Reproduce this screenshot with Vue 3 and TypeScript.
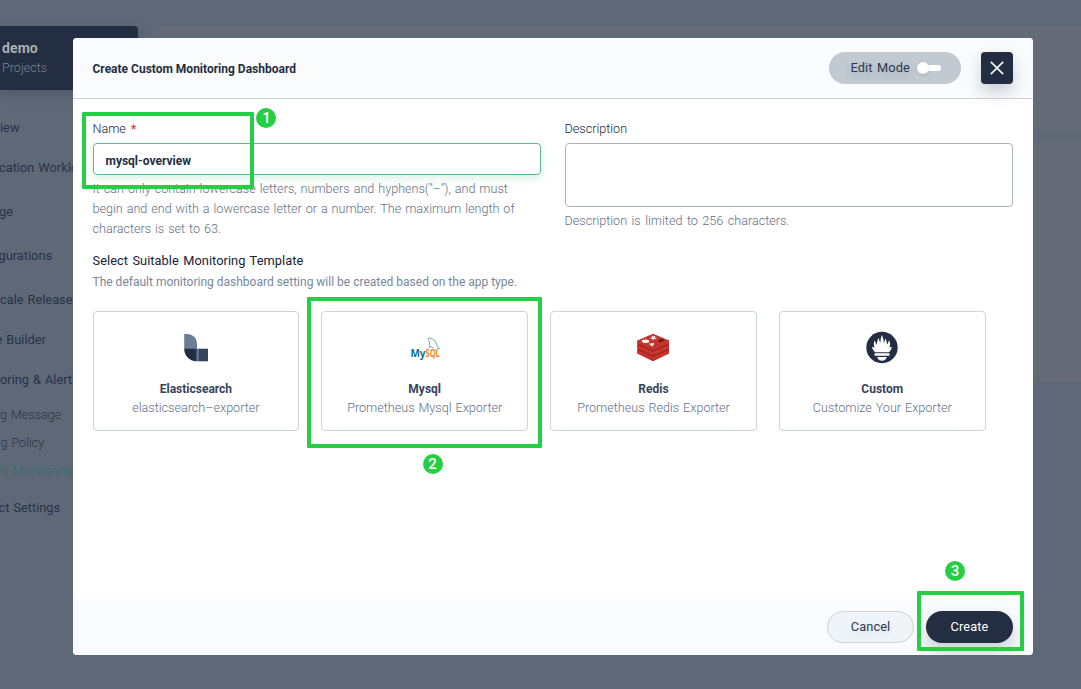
<script setup lang="ts">
interface NavItem { text: string; top: number; left: number; kind?: 'sub' | 'active' }
interface Template { id: string; name: string; note: string }

const nav: NavItem[] = [
  { text: 'iew', top: 118, left: 0 },
  { text: 'cation Worklo', top: 158, left: -1 },
  { text: 'ge', top: 202, left: -1 },
  { text: 'gurations', top: 246, left: -1.5 },
  { text: 'cale Release', top: 290, left: 0 },
  { text: 'e Builder', top: 330, left: -4.5 },
  { text: 'oring & Alert', top: 370, left: 0 },
  { text: 'g Message', top: 405, left: 0, kind: 'sub' },
  { text: 'g Policy', top: 433, left: 0.5, kind: 'sub' },
  { text: 'm Monitoring', top: 461, left: -2.5, kind: 'active' },
  { text: 'ct Settings', top: 498, left: -1.5 },
]
const templates: Template[] = [
  { id: 'elastic', name: 'Elasticsearch', note: 'elasticsearch–exporter' },
  { id: 'mysql', name: 'Mysql', note: 'Prometheus Mysql Exporter' },
  { id: 'redis', name: 'Redis', note: 'Prometheus Redis Exporter' },
  { id: 'custom', name: 'Custom', note: 'Customize Your Exporter' },
]
</script>

<template>
  <div class="page">
    <div class="topline"></div>
    <div class="panel panel-top"></div>
    <div class="panel panel-bottom"></div>
    <div class="project"><strong>demo</strong><span>Projects</span></div>
    <div v-for="n in nav" :key="n.text" class="nav" :class="n.kind" :style="{ top: n.top + 'px', left: n.left + 'px' }">{{ n.text }}</div>

    <section class="modal">
      <header class="head">
        <h1>Create Custom Monitoring Dashboard</h1>
        <button class="mode"><span>Edit Mode</span><i class="switch"></i></button>
        <button class="close">
          <svg width="16" height="16" viewBox="0 0 16 16"><path d="M1.8 1.8 14.2 14.2M14.2 1.8 1.8 14.2" stroke="#f2f3f4" stroke-width="1.7" fill="none" /></svg>
        </button>
      </header>
      <main class="body">
        <div class="form">
          <div class="field">
            <label class="label">Name <b>*</b></label>
            <div class="input">mysql-overview</div>
            <p class="help">
              It can only contain lowercase letters, numbers and hyphens("–"), and must<br />
              begin and end with a lowercase letter or a number. The maximum length of<br />
              characters is set to 63.
            </p>
          </div>
          <div class="field">
            <label class="label">Description</label>
            <div class="area"></div>
            <p class="help help-desc">Description is limited to 256 characters.</p>
          </div>
        </div>
        <h2>Select Suitable Monitoring Template</h2>
        <p class="sub-title">The default monitoring dashboard setting will be created based on the app type.</p>
        <div class="cards">
          <div v-for="t in templates" :key="t.id" class="card">
            <svg v-if="t.id === 'elastic'" class="icon" viewBox="0 0 40 40">
              <path d="M8.2 6H11c5.8 0 10 4.3 10 10v5H8.2z" fill="#6c7d98" />
              <path d="M8.2 20.7H21v12.6C13.7 33.3 8.2 28 8.2 20.7z" fill="#242e42" />
              <path d="M20.3 20.7h3v12.6h-3z" fill="#5f708a" />
              <path d="M23 20.7h9v12.6h-9z" fill="#36435c" />
            </svg>
            <svg v-else-if="t.id === 'mysql'" class="icon" viewBox="0 0 40 40">
              <text x="5.4" y="28.7" font-size="10" font-weight="700" fill="#14708a">My<tspan fill="#f58220" textLength="14.3" lengthAdjust="spacingAndGlyphs">SQL</tspan></text>
              <path d="M28 20.3c-.5-1.2-.8-1.6-1.6-2-.6 0-.6 1.5-1 1.5-1.2-1-1.3-3.3-.7-5-.5-1.5-1.9-3-1.5-4.3.5-.8 2-.2 2.8.4 2.8-.2 4.7 2.8 5.6 5.4.5 2 1.2 2.7 2.7 4.2-1 .1-1.8.2-2.1.6" fill="none" stroke="#4f96ad" stroke-width=".9" />
            </svg>
            <svg v-else-if="t.id === 'redis'" class="icon" viewBox="0 0 40 40">
              <path d="M4.3 13 20 6.3l16 6.7v12.6L20 33.2 4.3 25.6z" fill="#a82822" />
              <path d="M4.3 22.2 20 29l16-6.8v3L20 32 4.3 25.2z" fill="#c9332e" />
              <path d="M4.3 17.2 20 24l16-6.8v3L20 27 4.3 20.2z" fill="#cc3530" />
              <path d="M4.3 12.4 20 5.8l16 6.6v2.8L20 22 4.3 15.2z" fill="#c9332e" />
              <ellipse cx="12.5" cy="13.3" rx="3.7" ry="1.7" fill="#fff" />
              <path d="m19 7.4 1.3 1.2 2.4-.4-.8 1.6 2 1-2.7.2-1.1 1.2-.8-1.5-2.4-.3 1.9-1zM15.6 15.7l5.8-.7-1.8 3.4z" fill="#fff" />
              <path d="m24.3 12.8 4.2-2.2 3.5 1.7-4.3 2.1z" fill="#791916" />
            </svg>
            <svg v-else class="icon" viewBox="0 0 40 40">
              <circle cx="20" cy="19.5" r="15.7" fill="#242e42" />
              <path d="M13 24.2c-1.7-2-2.7-3.7-3.1-5.2l2.6.5c-1.1-2.7-.9-5.4.5-7.2.2 2 .8 3.4 1.8 4.4.1-3.1 1-4.4 1.5-6.6 1.3 1.7 1.2 3.8 1.9 5 .5-2.5.4-5.5 1.8-8 1.1 2.4 1.5 5.3 1.8 7.8.9-1.4.8-3.1 1.9-4.5.6 2.2 1.1 3.7 1.4 6 1-1 1.5-2.3 1.8-4.1 1.5 2 1.6 4.6.5 7.2l2.7-.5c-.6 1.8-1.5 3.5-3.1 5.2z" fill="#fff" />
              <path d="M12.6 25.3h14.8v2.5H12.6zM15.2 29h9.6c-.4 2.4-2.3 3.7-4.8 3.7S15.6 31.4 15.2 29z" fill="#fff" />
            </svg>
            <strong>{{ t.name }}</strong>
            <span>{{ t.note }}</span>
          </div>
        </div>
      </main>
      <footer class="foot">
        <button class="btn cancel">Cancel</button>
        <button class="btn create">Create</button>
      </footer>
    </section>

    <div class="mark mark-1"></div><div class="mark mark-2"></div><div class="mark mark-3"></div>
    <div class="dot dot-1">1</div><div class="dot dot-2">2</div><div class="dot dot-3">3</div>
  </div>
</template>

<style>
body { margin: 0; overflow: hidden; }
</style>
<style scoped>
* { box-sizing: border-box; }
.page { position: relative; width: 1081px; height: 689px; overflow: hidden; background: #5f6877; font: 12px/20px Roboto, "Noto Sans", sans-serif; color: #242e42; }
.topline { position: absolute; top: 5px; left: 0; width: 100%; height: 1px; background: #5a6373; }
.panel { position: absolute; left: 158px; right: 0; background: #656a77; }
.panel-top { top: 26px; height: 104px; border-radius: 4px 0 0 0; }
.panel-bottom { top: 142px; height: 240px; }
.project { position: absolute; top: 26px; left: 0; width: 138px; height: 64px; padding: 12px 2px; display: flex; flex-direction: column; background: #242e42; border-radius: 0 4px 0 0; box-shadow: 0 4px 12px #242e4240; }
.project strong { font-size: 14px; line-height: 20px; color: #aaadb3; letter-spacing: .1px; }
.project span { font-size: 12.6px; line-height: 20px; color: #7b8492; font-weight: 300; }
.nav { position: absolute; color: #27334a; font-size: 12.8px; font-weight: 400; word-spacing: .85px; white-space: nowrap; }
.nav.sub { color: #2a364c; font-size: 12.6px; font-weight: 300; }
.nav.active { color: #2d7067; font-size: 12.6px; font-weight: 300; }
.modal { position: absolute; left: 73px; top: 38px; width: 960px; height: 617px; display: flex; flex-direction: column; background: #fff; border-radius: 4px; overflow: hidden; }
.head { display: flex; align-items: center; height: 61px; flex: none; padding: 0 20px 0 19.5px; background: #f9fbfd; border-bottom: 1px solid #ccd3db; }
h1 { margin: 2px auto 0 0; font-size: 12px; font-weight: 700; line-height: 20px; }
button { font: inherit; border: 0; padding: 0; }
.mode { width: 132px; height: 32px; border-radius: 16px; background: #c1c9d1; display: flex; align-items: center; padding-left: 21.5px; gap: 7px; color: #2c3950; font-size: 12.8px; font-weight: 400; letter-spacing: .1px; word-spacing: 1.2px; text-shadow: 0 4px 8px #36435c33; }
.switch { position: relative; width: 24px; height: 6px; border-radius: 3px; background: #fff; }
.switch::before { content: ''; position: absolute; left: 0; top: -3px; width: 12px; height: 12px; border-radius: 50%; background: #fff; box-shadow: 0 1px 3px #36435c33; }
.close { width: 32px; height: 32px; margin-left: 20px; border-radius: 4px; background: #242e42; display: grid; place-items: center; box-shadow: 0 8px 16px #242e4238; }
.body { flex: 1; padding: 20px 20px 0; }
.form { display: grid; grid-template-columns: 448px 448px; gap: 24px; height: 132px; }
.label { display: block; height: 24px; margin-left: -.5px; font-size: 12.6px; line-height: 20px; font-weight: 300; word-spacing: .85px; color: #182238; }
.label b { color: #d8433f; margin-left: 1px; font-weight: 500; }
.input { height: 32px; padding: 2px 11.5px 0; line-height: 30px; font-weight: 700; border: 1px solid #55bc8a; border-radius: 4px; box-shadow: 0 4px 8px #55bc8a33; }
.area { height: 64px; border: 1px solid #abb4be; border-radius: 4px; }
p { margin: 4px 0 0 -.5px; color: #79879c; }
.help { font-size: 12.6px; font-weight: 300; word-spacing: .85px; white-space: nowrap; color: #5f7089; }
.help-desc { word-spacing: 1.4px; }
h2 { margin: 0 0 0 -.5px; font-size: 12.8px; font-weight: 400; line-height: 20px; letter-spacing: .05px; word-spacing: 1.2px; color: #182238; }
.sub-title { margin-top: 1px; }
.cards { display: grid; grid-template-columns: repeat(4, 206.6px); gap: 22.2px; margin: 19px 0 0 -.4px; }
.card { height: 120px; border: 1px solid #ccd3db; border-radius: 4px; display: flex; flex-direction: column; align-items: center; padding-top: 16px; }
.icon { width: 40px; height: 40px; display: block; font-family: "Open Sans", sans-serif; }
.card strong { margin-top: 11px; line-height: 20px; color: #36435c; }
.card span { line-height: 18px; color: #5f7089; font-size: 12.6px; font-weight: 300; word-spacing: .85px; }
.foot { height: 56px; flex: none; background: #f9fbfd; display: flex; justify-content: flex-end; align-items: center; gap: 12px; padding-right: 20px; }
.btn { width: 87px; height: 32px; border-radius: 16px; font-size: 12.8px; font-weight: 400; letter-spacing: .1px; }
.cancel { background: #eff4f9; border: 1px solid #ccd3db; color: #2c3950; text-shadow: 0 4px 8px #36435c22; }
.create { background: #242e42; color: #fff; box-shadow: 0 8px 16px #242e4238; }
.mark { position: absolute; border: 4px solid #25cf44; border-radius: 1px; }
.mark-1 { left: 82px; top: 112px; width: 172px; height: 77px; }
.mark-2 { left: 307px; top: 297px; width: 235px; height: 151px; }
.mark-3 { left: 917px; top: 591px; width: 107px; height: 60px; }
.dot { position: absolute; width: 20px; height: 20px; border-radius: 50%; background: #25cf44; color: #fff; font: 500 15px/21px Roboto, sans-serif; text-align: center; }
.dot-1 { left: 256.4px; top: 108px; }
.dot-2 { left: 422.5px; top: 454px; }
.dot-3 { left: 945px; top: 560.5px; }
</style>
